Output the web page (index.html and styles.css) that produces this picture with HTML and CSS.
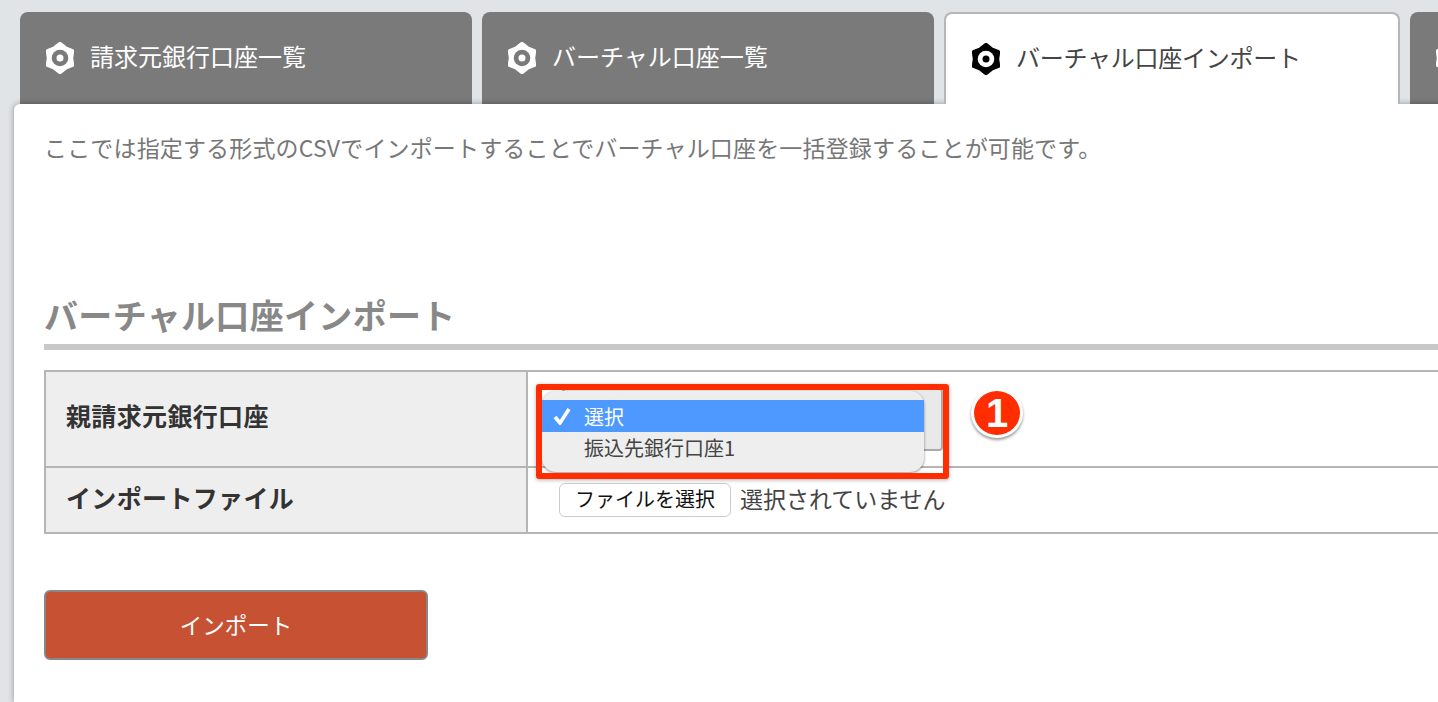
FILE: index.html
```html
<!DOCTYPE html>
<html lang="ja">
<head>
  <meta charset="UTF-8" />
  <title>バーチャル口座インポート</title>
  <link rel="stylesheet" href="styles.css">
</head>
<body>
  <div class="tabs">
    <a class="tab">
      <svg class="tab-icon" viewBox="0 0 28 32"><polygon class="nut" points="14,2.500 19.350,6.800 25.700,9.250 24.700,16 25.700,22.750 19.350,25.200 14,29.500 8.650,25.200 2.300,22.750 3.300,16 2.300,9.250 8.650,6.800"/><circle class="hole" cx="14" cy="16" r="8.300"/><circle class="dot" cx="14" cy="16" r="3.500"/></svg>
      <span>請求元銀行口座一覧</span>
    </a>
    <a class="tab">
      <svg class="tab-icon" viewBox="0 0 28 32"><polygon class="nut" points="14,2.500 19.350,6.800 25.700,9.250 24.700,16 25.700,22.750 19.350,25.200 14,29.500 8.650,25.200 2.300,22.750 3.300,16 2.300,9.250 8.650,6.800"/><circle class="hole" cx="14" cy="16" r="8.300"/><circle class="dot" cx="14" cy="16" r="3.500"/></svg>
      <span>バーチャル口座一覧</span>
    </a>
    <a class="tab active">
      <svg class="tab-icon" viewBox="0 0 28 32"><polygon class="nut" points="14,2.500 19.350,6.800 25.700,9.250 24.700,16 25.700,22.750 19.350,25.200 14,29.500 8.650,25.200 2.300,22.750 3.300,16 2.300,9.250 8.650,6.800"/><circle class="hole" cx="14" cy="16" r="8.300"/><circle class="dot" cx="14" cy="16" r="3.500"/></svg>
      <span>バーチャル口座インポート</span>
    </a>
    <a class="tab">
      <svg class="tab-icon" viewBox="0 0 28 32"><polygon class="nut" points="14,2.500 19.350,6.800 25.700,9.250 24.700,16 25.700,22.750 19.350,25.200 14,29.500 8.650,25.200 2.300,22.750 3.300,16 2.300,9.250 8.650,6.800"/><circle class="hole" cx="14" cy="16" r="8.300"/><circle class="dot" cx="14" cy="16" r="3.500"/></svg>
    </a>
  </div>

  <div class="panel">
    <p class="lead">ここでは指定する形式のCSVでインポートすることでバーチャル口座を一括登録することが可能です。</p>

    <h2 class="section-title">バーチャル口座インポート</h2>

    <table class="form-table">
      <tr class="row-select">
        <th><span>親請求元銀行口座</span></th>
        <td>
          <div class="select-box"></div>
          <div class="select-menu">
            <div class="menu-item selected">
              <svg class="check" viewBox="0 0 18 18"><path d="M2 10l5 6L16 2" fill="none" stroke="#fff" stroke-width="3.600"/></svg>
              選択
            </div>
            <div class="menu-item">振込先銀行口座1</div>
          </div>
          <div class="red-frame"></div>
          <div class="badge">1</div>
        </td>
      </tr>
      <tr class="row-file">
        <th><span>インポートファイル</span></th>
        <td>
          <div class="file-field">
            <span class="file-btn">ファイルを選択</span>
            <span class="file-name">選択されていません</span>
          </div>
        </td>
      </tr>
    </table>

    <button class="submit">インポート</button>
  </div>
</body>
</html>
```

FILE: styles.css
```css
html, body {
  height: 100%;
}

body {
  margin: 0;
  padding-top: 12px;
  box-sizing: border-box;
  overflow: hidden;
  background: #e0e4e7;
  font-family: "Noto Sans CJK JP", "Noto Sans", sans-serif;
  color: #777;
}

.tabs {
  display: flex;
  gap: 10px;
  width: 1900px;
  margin-left: 20px;
}

.tab {
  display: flex;
  align-items: center;
  gap: 16px;
  box-sizing: border-box;
  width: 452px;
  height: 92px;
  padding: 0 0 5px 26px;
  border-radius: 8px 8px 0 0;
  background: #7a7a7a;
  color: #fff;
  font-size: 24px;
}

.tab.active {
  position: relative;
  z-index: 2;
  width: 456px;
  padding-left: 26px;
  border: 2px solid #b5b5b5;
  border-bottom: none;
  background: #fff;
  color: #444;
  letter-spacing: -0.25px;
}

.tab-icon {
  flex: none;
  width: 28px;
  height: 32px;
  margin-top: 4px;
}

.nut {
  fill: #fff;
  stroke: #fff;
  stroke-width: 5;
  stroke-linejoin: round;
}

.hole {
  fill: #7a7a7a;
}

.dot {
  fill: #fff;
}

.active .nut {
  fill: #000;
  stroke: #000;
}

.active .hole {
  fill: #fff;
}

.active .dot {
  fill: #000;
}

.panel {
  position: relative;
  z-index: 1;
  box-sizing: border-box;
  width: 1800px;
  height: 598px;
  margin-left: 14px;
  padding: 26px 30px 0;
  border-radius: 6px 0 0 0;
  background: #fff;
  box-shadow: 0 0 6px rgba(0, 0, 0, 0.35);
}

.lead {
  margin: 0;
  font-size: 23px;
  line-height: 34px;
  letter-spacing: 0.16px;
  white-space: nowrap;
}

.section-title {
  margin: 127px 0 0;
  padding-bottom: 5px;
  border-bottom: 6px solid #c8c8c8;
  font-size: 34px;
  line-height: 48px;
  letter-spacing: 0.33px;
  font-weight: 700;
  color: #888;
}

.form-table {
  width: 1600px;
  margin-top: 20px;
  border-collapse: separate;
  border-spacing: 0;
  border-top: 2px solid #b5b5b5;
  border-left: 2px solid #b5b5b5;
}

.form-table th,
.form-table td {
  padding: 0;
  border-right: 2px solid #b5b5b5;
  border-bottom: 2px solid #b5b5b5;
}

.form-table th {
  box-sizing: border-box;
  width: 482px;
  padding-left: 20px;
  background: #eee;
  color: #333;
  font-size: 25px;
  letter-spacing: 0.35px;
  font-weight: 700;
  text-align: left;
}

.row-select th {
  padding-bottom: 8px;
}

.row-file th {
  padding-bottom: 6px;
}

.form-table td {
  background: #fff;
}

.row-select td {
  position: relative;
  z-index: 1;
}

.row-select th,
.row-select td {
  height: 94px;
}

.row-file th,
.row-file td {
  height: 64px;
}

.select-box {
  box-sizing: border-box;
  width: 381px;
  height: 63px;
  margin: 0 0 0 34px;
  border: 2px solid #aaa;
  border-radius: 4px;
  background: #e9e9e9;
}

.select-menu {
  position: absolute;
  left: 14px;
  top: 19px;
  box-sizing: border-box;
  width: 382px;
  height: 81px;
  padding-top: 9px;
  border-radius: 14px;
  background: #eee;
  box-shadow: 0 1px 3px rgba(0, 0, 0, 0.45);
  color: #444;
  font-size: 20px;
}

.menu-item {
  position: relative;
  height: 32px;
  padding-left: 42px;
  line-height: 32px;
}

.menu-item.selected {
  background: #4d99ff;
  color: #fff;
  line-height: 33px;
}

.check {
  position: absolute;
  left: 11px;
  top: 7px;
  width: 18px;
  height: 18px;
}

.red-frame {
  position: absolute;
  left: 8px;
  top: 12px;
  box-sizing: border-box;
  width: 413px;
  height: 95px;
  border: 6px solid #ff2d00;
  border-radius: 3px;
  box-shadow: 0 1px 4px rgba(0, 0, 0, 0.3);
}

.badge {
  position: absolute;
  left: 443px;
  top: 16px;
  box-sizing: border-box;
  width: 52px;
  height: 50px;
  border: 3px solid #fff;
  border-radius: 50%;
  background: #ff2d00;
  box-shadow: 0 2px 3px rgba(0, 0, 0, 0.4);
  color: #fff;
  font-family: "Liberation Sans", sans-serif;
  font-size: 40px;
  font-weight: 700;
  line-height: 44px;
  text-align: center;
}

.file-field {
  display: flex;
  align-items: center;
  gap: 9px;
  margin: 0 0 1px 31px;
}

.file-btn {
  box-sizing: border-box;
  width: 172px;
  height: 34px;
  border: 1px solid #ccc;
  border-radius: 6px;
  background: #fff;
  color: #111;
  font-size: 20px;
  line-height: 30px;
  text-align: center;
}

.file-name {
  margin-bottom: 3px;
  color: #444;
  font-size: 23px;
}

.submit {
  display: block;
  box-sizing: border-box;
  width: 384px;
  height: 70px;
  margin-top: 56px;
  padding: 0 0 3px;
  border: 2px solid #888;
  border-radius: 6px;
  background: #c65233;
  color: #fff;
  font-family: inherit;
  font-size: 22.500px;
}
```
